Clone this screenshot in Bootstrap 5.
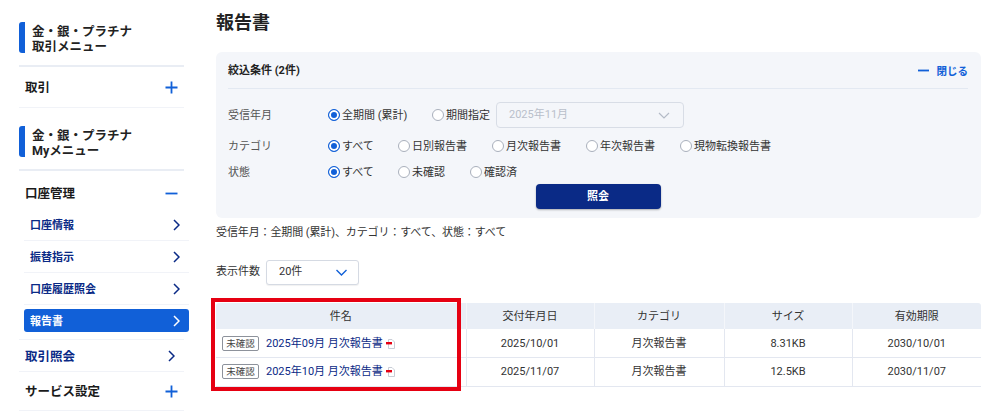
<!DOCTYPE html>
<html lang="ja">
  <head>
    <meta charset="UTF-8" />
    <meta name="viewport" content="width=device-width, initial-scale=1.0" />
    <title>報告書</title>
    <link href="https://cdn.jsdelivr.net/npm/bootstrap@5.3.0/dist/css/bootstrap.min.css" rel="stylesheet" />
    <style>
      body {
        font-family: Roboto, "Noto Sans CJK JP", sans-serif;
        font-size: 11px;
        color: #333;
        background: #fff;
        overflow: hidden;
      }
      .page-wrap { width: 1000px; height: 416px; padding-left: 19px; }
      /* サイドメニュー */
      .side-menu { width: 170px; flex: none; padding-top: 22px; }
      .side-head {
        width: 165px;
        padding-bottom: 12px;
        border-bottom: 2px solid #e9edf4;
      }
      .side-head-inner {
        height: 31px;
        border-left: 6px solid #1160d8;
        border-radius: 3px;
        padding: 2px 0 0 7px;
        font-size: 12.5px;
        font-weight: 700;
        line-height: 15px;
        color: #222;
      }
      .side-top {
        width: 165px;
        padding: 0 6px;
        font-size: 12.5px;
        font-weight: 700;
        color: #1a1a1a;
        border-bottom: 1px solid #f1f3f8;
      }
      .side-sub {
        width: 165px;
        height: 32px;
        margin-left: 5px;
        padding: 0 9px 0 6px;
        font-size: 11px;
        font-weight: 700;
        color: #0a2a86;
        border-bottom: 1px solid #f1f3f8;
      }
      .side-sub.is-active {
        height: 23px;
        margin-top: 4px;
        background: #1160d8;
        color: #fff;
        border: 0;
        border-radius: 3px;
      }
      .side-top span, .side-sub span { padding-top: 3px; }
      /* メイン */
      .main-area { width: 765px; margin-left: 27px; position: relative; }
      .page-title { font-size: 18px; font-weight: 700; line-height: 24px; margin: 11px 0 17px; color: #222; }
      .filter-box { height: 166px; background: #f4f6fa; border-radius: 6px; padding: 0 13px 0 12px; }
      .filter-head { height: 37px; border-bottom: 1px solid #e3e9f2; margin-bottom: 11px; }
      .filter-title { font-size: 11px; font-weight: 700; color: #222; padding-top: 2px; }
      .close-link { font-size: 10.5px; font-weight: 700; color: #1160d8; }
      .close-link span { padding-top: 4px; }
      .filter-row { height: 26px; }
      .filter-label { width: 100px; color: #555; padding-top: 3px; }
      .radio-item { color: #333; }
      .radio-item span { padding-top: 3px; }
      .radio-mark {
        width: 12px;
        height: 12px;
        border: 1px solid #a9b0bc;
        border-radius: 50%;
        background: #fff;
        margin-right: 2px;
        flex: none;
      }
      .radio-mark.is-on { border: 1px solid #1160d8; box-shadow: inset 0 0 0 2px #fff; background: #1160d8; }
      .date-select {
        width: 188px;
        height: 26px;
        margin-left: 6px;
        padding: 0 13px 0 12px;
        border: 1px solid #d8dde6;
        border-radius: 4px;
        color: #b9bfca;
      }
      .search-btn {
        display: block;
        width: 125px;
        height: 25px;
        margin: 0 auto;
        padding: 2px 0 0;
        font-size: 11px;
        font-weight: 700;
        color: #fff;
        background: #0a2a86;
        border: 0;
        border-radius: 4px;
        box-shadow: 0 1px 2px rgba(0, 0, 0, 0.3);
      }
      .filter-summary { margin: 7px 0 0; line-height: 16px; letter-spacing: -0.01em; }
      .count-row { margin-top: 19px; }
      .count-select {
        width: 93px;
        height: 25px;
        margin-left: 6px;
        padding: 0 11px 0 12px;
        background: #fff;
        border: 1px solid #d5dae3;
        border-radius: 3px;
        box-shadow: 0 1px 1px rgba(0, 0, 0, 0.06);
      }
      /* 一覧 */
      .report-table { width: 765px; margin: 18px 0 0; table-layout: fixed; border-collapse: collapse; }
      .report-table th {
        height: 26px;
        padding: 3px 0 0;
        background: #e9eef6;
        font-weight: 400;
        text-align: center;
        color: #333;
        border-right: 1px solid #f4f6fa;
      }
      .report-table th:first-child { border-top-left-radius: 3px; }
      .report-table th:last-child { border-top-right-radius: 3px; border-right: 0; }
      .report-table td {
        height: 29px;
        padding: 2px 0 0;
        text-align: center;
        border-bottom: 1px solid #e3e7f0;
        border-right: 1px solid #e3e7f0;
        color: #333;
      }
      .report-table tbody tr:first-child td { height: 28px; }
      .report-table td:last-child { border-right: 0; }
      .report-table td.name-cell { text-align: left; padding-left: 6px; }
      .unread-tag {
        display: inline-block;
        width: 37px;
        height: 15px;
        margin-right: 7px;
        font-size: 9.5px;
        line-height: 13px;
        text-align: center;
        color: #444;
        border: 1px solid #8d929b;
        border-radius: 2px;
        background: #fff;
      }
      .report-link { color: #0a2a86; text-decoration: none; }
      .pdf-mark { margin-left: 0; vertical-align: -2px; }
      .red-frame {
        position: absolute;
        left: -5px;
        top: 298px;
        width: 250px;
        height: 93px;
        border: 4px solid #e60012;
        pointer-events: none;
      }
    </style>
  </head>
  <body>
    <div class="page-wrap d-flex">
      <!-- サイドメニュー -->
      <div class="side-menu">
        <div class="side-head">
          <div class="side-head-inner">金・銀・プラチナ<br />取引メニュー</div>
        </div>
        <div class="side-top d-flex align-items-center justify-content-between" style="height: 41px">
          <span>取引</span>
          <svg width="13" height="13" viewBox="0 0 13 13"><path d="M6.5 0.5v12M0.5 6.5h12" stroke="#1160d8" stroke-width="1.8" fill="none" /></svg>
        </div>
        <div class="side-head" style="margin-top: 18px">
          <div class="side-head-inner">金・銀・プラチナ<br />Myメニュー</div>
        </div>
        <div class="side-top d-flex align-items-center justify-content-between border-0" style="height: 38px; padding-top: 6px">
          <span>口座管理</span>
          <svg width="13" height="13" viewBox="0 0 13 13"><path d="M0.5 6.5h12" stroke="#1160d8" stroke-width="1.8" fill="none" /></svg>
        </div>
        <div class="side-sub d-flex align-items-center justify-content-between">
          <span>口座情報</span>
          <svg width="7" height="12" viewBox="0 0 7 12"><path d="M1 1l5 5-5 5" stroke="#0a2a86" stroke-width="1.5" fill="none" /></svg>
        </div>
        <div class="side-sub d-flex align-items-center justify-content-between">
          <span>振替指示</span>
          <svg width="7" height="12" viewBox="0 0 7 12"><path d="M1 1l5 5-5 5" stroke="#0a2a86" stroke-width="1.5" fill="none" /></svg>
        </div>
        <div class="side-sub d-flex align-items-center justify-content-between">
          <span>口座履歴照会</span>
          <svg width="7" height="12" viewBox="0 0 7 12"><path d="M1 1l5 5-5 5" stroke="#0a2a86" stroke-width="1.5" fill="none" /></svg>
        </div>
        <div class="side-sub is-active d-flex align-items-center justify-content-between">
          <span>報告書</span>
          <svg width="7" height="12" viewBox="0 0 7 12"><path d="M1 1l5 5-5 5" stroke="#fff" stroke-width="1.5" fill="none" /></svg>
        </div>
        <div class="side-top d-flex align-items-center justify-content-between" style="height: 33px; margin-top: 7px; border-top: 1px solid #f1f3f8; padding-right: 9px; color: #0a2a86">
          <span>取引照会</span>
          <svg width="7" height="12" viewBox="0 0 7 12"><path d="M1 1l5 5-5 5" stroke="#0a2a86" stroke-width="1.5" fill="none" /></svg>
        </div>
        <div class="side-top d-flex align-items-center justify-content-between" style="height: 39px">
          <span>サービス設定</span>
          <svg width="13" height="13" viewBox="0 0 13 13"><path d="M6.5 0.5v12M0.5 6.5h12" stroke="#1160d8" stroke-width="1.8" fill="none" /></svg>
        </div>
      </div>

      <!-- メイン -->
      <div class="main-area">
        <h1 class="page-title">報告書</h1>
        <div class="filter-box">
          <div class="filter-head d-flex align-items-center justify-content-between">
            <span class="filter-title">絞込条件 (2件)</span>
            <span class="close-link d-flex align-items-center gap-2">
              <svg width="11" height="3" viewBox="0 0 11 3"><path d="M0 1.5h11" stroke="#1160d8" stroke-width="1.8" /></svg>
              <span>閉じる</span>
            </span>
          </div>
          <div class="filter-row d-flex align-items-center" style="height: 30px; margin-bottom: 3px">
            <span class="filter-label">受信年月</span>
            <span class="radio-item d-flex align-items-center" style="width: 104px"><i class="radio-mark is-on"></i><span>全期間 (累計)</span></span>
            <span class="radio-item d-flex align-items-center"><i class="radio-mark"></i><span>期間指定</span></span>
            <div class="date-select d-flex align-items-center justify-content-between">
              <span>2025年11月</span>
              <svg width="12" height="7" viewBox="0 0 12 7"><path d="M1 1l5 5 5-5" stroke="#b4bbc7" stroke-width="1.2" fill="none" /></svg>
            </div>
          </div>
          <div class="filter-row d-flex align-items-center">
            <span class="filter-label">カテゴリ</span>
            <span class="radio-item d-flex align-items-center" style="width: 70px"><i class="radio-mark is-on"></i><span>すべて</span></span>
            <span class="radio-item d-flex align-items-center" style="width: 94px"><i class="radio-mark"></i><span>日別報告書</span></span>
            <span class="radio-item d-flex align-items-center" style="width: 94px"><i class="radio-mark"></i><span>月次報告書</span></span>
            <span class="radio-item d-flex align-items-center" style="width: 94px"><i class="radio-mark"></i><span>年次報告書</span></span>
            <span class="radio-item d-flex align-items-center"><i class="radio-mark"></i><span>現物転換報告書</span></span>
          </div>
          <div class="filter-row d-flex align-items-center" style="height: 25px">
            <span class="filter-label">状態</span>
            <span class="radio-item d-flex align-items-center" style="width: 70px"><i class="radio-mark is-on"></i><span>すべて</span></span>
            <span class="radio-item d-flex align-items-center" style="width: 72px"><i class="radio-mark"></i><span>未確認</span></span>
            <span class="radio-item d-flex align-items-center"><i class="radio-mark"></i><span>確認済</span></span>
          </div>
          <button type="button" class="btn search-btn">照会</button>
        </div>
        <p class="filter-summary">受信年月：全期間 (累計)、カテゴリ：すべて、状態：すべて</p>
        <div class="count-row d-flex align-items-center">
          <span>表示件数</span>
          <div class="count-select d-flex align-items-center justify-content-between">
            <span>20件</span>
            <svg width="11" height="7" viewBox="0 0 11 7"><path d="M0.5 1l5 5 5-5" stroke="#1160d8" stroke-width="1.4" fill="none" /></svg>
          </div>
        </div>
        <table class="report-table">
          <colgroup>
            <col style="width: 250px" />
            <col style="width: 128px" />
            <col style="width: 130px" />
            <col style="width: 128px" />
            <col style="width: 129px" />
          </colgroup>
          <thead>
            <tr>
              <th>件名</th>
              <th>交付年月日</th>
              <th>カテゴリ</th>
              <th>サイズ</th>
              <th>有効期限</th>
            </tr>
          </thead>
          <tbody>
            <tr>
              <td class="name-cell">
                <span class="unread-tag">未確認</span><a class="report-link" href="#">2025年09月 月次報告書</a>
                <svg class="pdf-mark" width="9" height="10" viewBox="0 0 9 10"><path d="M2.5 0.5h3.5l2.5 2.5v6.5h-6z" fill="#fff" stroke="#c9cdd6" /><rect x="0" y="3" width="6" height="2.4" fill="#e60012" /></svg>
              </td>
              <td>2025/10/01</td>
              <td>月次報告書</td>
              <td>8.31KB</td>
              <td>2030/10/01</td>
            </tr>
            <tr>
              <td class="name-cell">
                <span class="unread-tag">未確認</span><a class="report-link" href="#">2025年10月 月次報告書</a>
                <svg class="pdf-mark" width="9" height="10" viewBox="0 0 9 10"><path d="M2.5 0.5h3.5l2.5 2.5v6.5h-6z" fill="#fff" stroke="#c9cdd6" /><rect x="0" y="3" width="6" height="2.4" fill="#e60012" /></svg>
              </td>
              <td>2025/11/07</td>
              <td>月次報告書</td>
              <td>12.5KB</td>
              <td>2030/11/07</td>
            </tr>
          </tbody>
        </table>
        <div class="red-frame"></div>
      </div>
    </div>
    <script src="https://cdn.jsdelivr.net/npm/bootstrap@5.3.0/dist/js/bootstrap.bundle.min.js"></script>
  </body>
</html>
